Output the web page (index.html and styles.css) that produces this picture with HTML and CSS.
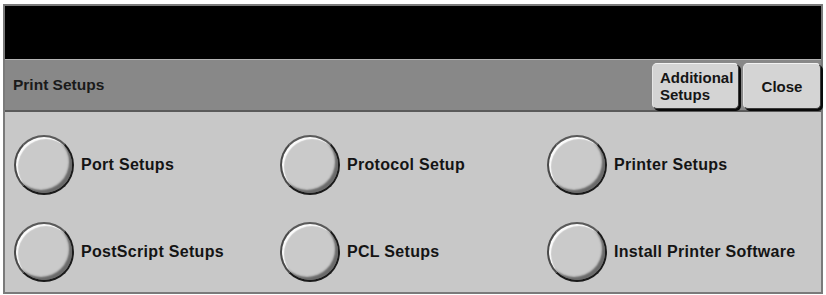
FILE: index.html
```html
<!DOCTYPE html>
<html>
<head>
<meta charset="utf-8">
<link rel="stylesheet" href="styles.css">
</head>
<body>
<div class="frame">
  <div class="titlebar"></div>
  <div class="header">
    <div class="header-title">Print Setups</div>
    <div class="header-buttons">
      <div class="btn btn-additional">Additional<br>Setups</div>
      <div class="btn btn-close">Close</div>
    </div>
  </div>
  <div class="content">
    <div class="option"><span class="radio"></span><span class="label">Port Setups</span></div>
    <div class="option"><span class="radio"></span><span class="label">Protocol Setup</span></div>
    <div class="option"><span class="radio"></span><span class="label">Printer Setups</span></div>
    <div class="option"><span class="radio"></span><span class="label">PostScript Setups</span></div>
    <div class="option"><span class="radio"></span><span class="label">PCL Setups</span></div>
    <div class="option"><span class="radio"></span><span class="label">Install Printer Software</span></div>
  </div>
</div>
</body>
</html>
```

FILE: styles.css
```css
html, body {
  margin: 0;
  padding: 0;
  background: #ffffff;
}
body {
  font-family: "Liberation Sans", Arial, sans-serif;
  font-weight: bold;
  color: #141414;
}
.frame {
  margin: 4px 0 0 3px;
  width: 816px;
  height: 286px;
  border: 2px solid #7a7a7a;
  display: flex;
  flex-direction: column;
  background: #c8c8c8;
}
.titlebar {
  height: 53px;
  background: #000;
  border-bottom: 1px solid #b4b4b4;
}
.header {
  height: 50px;
  background: #888888;
  border-bottom: 2px solid #5a5a5a;
  display: flex;
  align-items: center;
  justify-content: space-between;
  padding-left: 8px;
}
.header-title {
  font-size: 15.5px;
  color: #1a1a1a;
}
.header-buttons {
  display: flex;
  gap: 4px;
  align-self: stretch;
  padding: 3px 0 1px 0;
}
.btn {
  background: #d4d4d4;
  border-radius: 5px;
  border: 1px solid #3a3a3a;
  border-top-color: #f2f2f2;
  border-left-color: #e6e6e6;
  box-shadow: 2px 2px 0 #0a0a0a;
  font-size: 15px;
  line-height: 17px;
  color: #151515;
  display: flex;
  align-items: center;
}
.btn-additional {
  width: 78px;
  padding-left: 7px;
}
.btn-close {
  width: 76px;
  justify-content: center;
}
.content {
  flex: 1;
  display: grid;
  grid-template-columns: 266px 267px 1fr;
  grid-template-rows: 60px 60px;
  row-gap: 27px;
  padding: 23px 0 0 9px;
}
.option {
  display: flex;
  align-items: center;
  gap: 7px;
}
.radio {
  width: 56px;
  height: 56px;
  border-radius: 50%;
  border: 2px solid #1a1a1a;
  border-top-color: #5a5a5a;
  border-left-color: #4a4a4a;
  background: #cacaca;
  box-shadow: inset 2px 2px 1px #fbfbfb, inset -3px -3px 2px #6a6a6a;
  flex: none;
}
.label {
  font-size: 16px;
  letter-spacing: 0.3px;
  color: #141414;
}
```
